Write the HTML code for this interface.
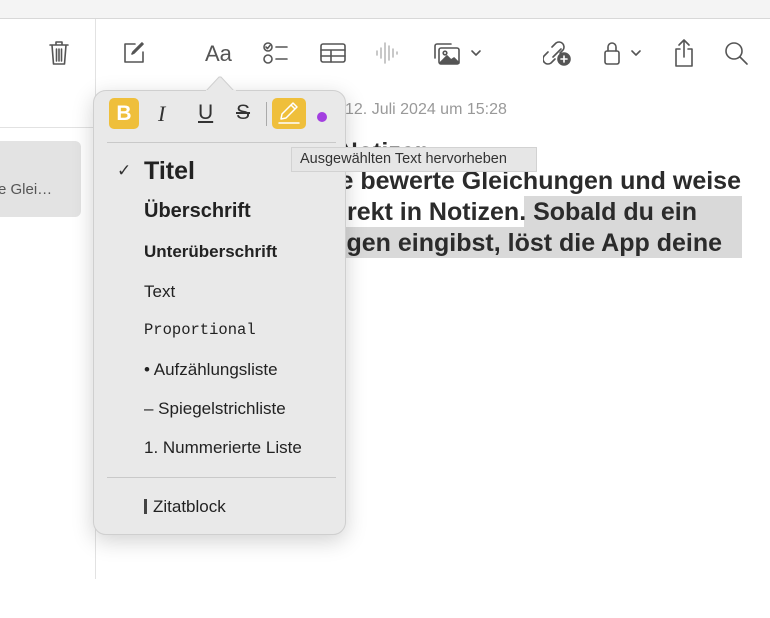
<!DOCTYPE html>
<html><head><meta charset="utf-8"><style>
*{margin:0;padding:0;box-sizing:border-box}
body{width:770px;height:578px;overflow:hidden;background:#f4f4f4;font-family:"Liberation Sans",sans-serif;position:relative}
.win{position:absolute;left:0;top:18px;width:790px;height:600px;background:#fff;border-top:1px solid #d8d8d8;border-radius:0 14px 0 0}
.abs{position:absolute}
.ic{position:absolute;stroke:#555;fill:none;stroke-width:1.6;stroke-linecap:round;stroke-linejoin:round}
.ln{position:absolute;font-weight:bold;font-size:25px;color:#2b2b2b;white-space:nowrap}
.pop{position:absolute;z-index:5;left:93px;top:90px;width:253px;height:445px;background:#e9e9e9;border:1px solid #cfcfcf;border-radius:13px;box-shadow:0 6px 22px rgba(0,0,0,.18)}
.it{position:absolute;left:50px;color:#222;font-size:17px;white-space:nowrap}
</style></head><body>
<div class="win"></div>
<div class="abs" style="left:95px;top:19px;width:1px;height:560px;background:#e2e2e2"></div>
<div class="abs" style="left:0;top:127px;width:95px;height:1px;background:#e2e2e2"></div>
<div class="abs" style="left:0;top:141px;width:81px;height:76px;background:#e3e3e3;border-radius:0 6px 6px 0"></div>
<div class="abs" style="left:-2px;top:181px;font-size:15px;color:#555">e Glei…</div>

<svg class="ic" style="left:47px;top:40px" width="24" height="26" viewBox="0 0 24 26"><path d="M3 5h18M9 5V2h6v3M5 5l1.5 19h11L19 5M9.5 9v12M12 9v12M14.5 9v12"/></svg>
<svg class="ic" style="left:122px;top:41px" width="24" height="24" viewBox="0 0 24 24"><path d="M13 3H3v18h18V11M20 2l-9 9-1 2 2-1 9-9"/></svg>
<div class="abs" style="left:205px;top:41px;font-size:22px;color:#555">Aa</div>
<svg class="ic" style="left:262px;top:41px" width="28" height="24" viewBox="0 0 28 24"><circle cx="6" cy="6" r="4"/><path d="M4 6l1.5 1.5L8 4.5M14 6h11"/><circle cx="6" cy="18" r="4"/><path d="M14 18h11"/></svg>
<svg class="ic" style="left:319px;top:42px" width="28" height="22" viewBox="0 0 28 22"><rect x="2" y="2" width="24" height="18" rx="2"/><path d="M2 8h24M2 14h24M12 8v12"/></svg>
<svg class="ic" style="left:375px;top:40px;stroke:#bbb" width="24" height="26" viewBox="0 0 24 26"><path d="M2 11v4M6 8v10M10 3v20M14 6v14M18 9v8M22 12v2"/></svg>
<svg class="ic" style="left:432px;top:41px" width="30" height="26" viewBox="0 0 30 26"><path d="M3 17V5a2 2 0 012-2h14"/><rect x="7" y="7" width="20" height="16" rx="2"/><path d="M8 22l7-7 4 4 3-2 5 5z" fill="#555"/><circle cx="13" cy="12" r="1.8"/></svg>
<svg class="ic" style="left:470px;top:48px" width="12" height="10" viewBox="0 0 12 10"><path d="M2 3l4 4 4-4"/></svg>
<svg class="ic" style="left:543px;top:39px" width="30" height="28" viewBox="0 0 30 28"><path d="M9 8l4-4a5 5 0 017 7l-3 3M12 20l-4 4a5 5 0 01-7-7l4-4M10 18l8-8"/><circle cx="21" cy="20" r="6" fill="#555"/><path d="M21 17v6M18 20h6" stroke="#fff"/></svg>
<svg class="ic" style="left:602px;top:40px" width="20" height="26" viewBox="0 0 20 26"><rect x="3" y="11" width="14" height="13" rx="2"/><path d="M6 11V7a4 4 0 018 0v4"/></svg>
<svg class="ic" style="left:630px;top:48px" width="12" height="10" viewBox="0 0 12 10"><path d="M2 3l4 4 4-4"/></svg>
<svg class="ic" style="left:672px;top:38px" width="24" height="30" viewBox="0 0 24 30"><path d="M8 11H4v17h16V11h-4M12 2v17M7 7l5-5 5 5"/></svg>
<svg class="ic" style="left:724px;top:41px" width="26" height="26" viewBox="0 0 26 26"><circle cx="10" cy="10" r="8"/><path d="M16 16l7 7"/></svg>

<div class="abs" style="left:345px;top:101px;font-size:16px;color:#999">12. Juli 2024 um 15:28</div>
<div class="abs" style="left:524px;top:196px;width:218px;height:31px;background:#d9d9d9"></div>
<div class="abs" style="left:340px;top:227px;width:402px;height:31px;background:#d9d9d9"></div>
<div class="ln" style="right:340px;top:138px">Notizen</div>
<div class="ln" style="right:29px;top:167px">Sie bewerte Gleichungen und weise</div>
<div class="ln" style="right:73px;top:198px">direkt in Notizen. Sobald du ein</div>
<div class="ln" style="right:48px;top:229px">Gleichungen eingibst, löst die App deine</div>

<div class="abs" style="z-index:10;left:291px;top:147px;width:246px;height:25px;background:#e6e6e6;border:1px solid #d2d2d2;font-size:14.5px;color:#333;padding:3px 0 0 8px;white-space:nowrap">Ausgewählten Text hervorheben</div>

<div class="pop">
 <div class="abs" style="left:15px;top:7px;width:30px;height:31px;background:#efbf3b;border-radius:5px;color:#fff;font-weight:bold;font-size:21px;text-align:center;line-height:31px">B</div>
 <div class="abs" style="left:64px;top:10px;font-family:'Liberation Serif',serif;font-style:italic;font-size:22px;color:#333">I</div>
 <div class="abs" style="left:104px;top:10px;font-size:21px;color:#333;text-decoration:underline">U</div>
 <div class="abs" style="left:142px;top:10px;font-size:21px;color:#333;text-decoration:line-through">S</div>
 <div class="abs" style="left:172px;top:11px;width:1px;height:24px;background:#aaa"></div>
 <div class="abs" style="left:178px;top:7px;width:34px;height:31px;background:#efbf3b;border-radius:5px"></div>
 <svg class="ic" style="left:183px;top:9px;stroke:#fff;stroke-width:1.5" width="24" height="26" viewBox="0 0 24 26"><path d="M16 3l4 4-11 11-5 1 1-5zM14 5l4 4M2 23h20"/></svg>
 <div class="abs" style="left:223px;top:21px;width:10px;height:10px;border-radius:50%;background:#a33fe0"></div>
 <div class="abs" style="left:13px;top:51px;width:229px;height:1px;background:#c9c9c9"></div>
 <div class="abs" style="left:23px;top:70px;font-size:17px;color:#333">✓</div>
 <div class="it" style="top:66px;font-size:25px;font-weight:bold">Titel</div>
 <div class="it" style="top:109px;font-size:20px;font-weight:bold">Überschrift</div>
 <div class="it" style="top:151px;font-size:17px;font-weight:bold">Unterüberschrift</div>
 <div class="it" style="top:191px">Text</div>
 <div class="it" style="top:230px;font-family:'Liberation Mono',monospace;font-size:15.5px">Proportional</div>
 <div class="it" style="top:269px">• Aufzählungsliste</div>
 <div class="it" style="top:308px">– Spiegelstrichliste</div>
 <div class="it" style="top:347px">1. Nummerierte Liste</div>
 <div class="abs" style="left:13px;top:386px;width:229px;height:1px;background:#c9c9c9"></div>
 <div class="it" style="top:406px"><span style="display:inline-block;width:3px;height:15px;background:#444;vertical-align:-2px;margin-right:6px"></span>Zitatblock</div>
</div>
<svg class="abs" style="z-index:6;left:206px;top:76px" width="30" height="16" viewBox="0 0 30 16"><path d="M0 15L13 1h2L28 15" fill="#e9e9e9" stroke="#cfcfcf"/><rect x="0" y="14" width="30" height="3" fill="#e9e9e9"/></svg>
</body></html>
